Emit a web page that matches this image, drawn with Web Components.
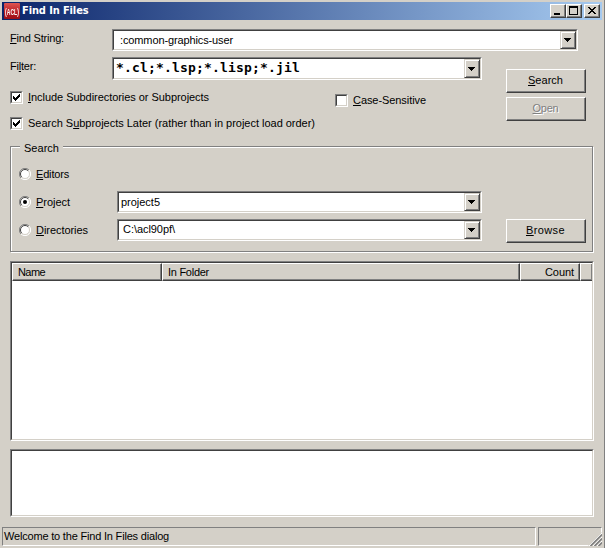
<!DOCTYPE html>
<html lang="en"><head><meta charset="utf-8"><title>Find In Files</title>
<style>
html,body{margin:0;width:605px;height:548px;overflow:hidden;background:#d4d0c8}
body{font:11px/14px "Liberation Sans",Arial,sans-serif;color:#000}
</style></head><body>
<find-dialog></find-dialog>
<script>
const define=(name,css,html,setup)=>customElements.define(name,class extends HTMLElement{
  constructor(){super();this.attachShadow({mode:'open'}).innerHTML=`<style>*{box-sizing:border-box}:host{box-sizing:border-box}${css}</style>${html}`;}
  connectedCallback(){if(setup)setup(this,this.shadowRoot);}
});
const px=v=>v+'px';

// Caption with an optional mnemonic letter; "w" is the advance width the text is spaced to.
define('ui-text',`:host{display:block;white-space:pre;flex:none}
 u{text-decoration:underline;text-decoration-thickness:1px;text-underline-offset:1px;text-decoration-skip-ink:none}`,
 `<span></span>`,(el,r)=>{
  const s=r.querySelector('span'),t=el.getAttribute('text'),k=el.hasAttribute('key')?+el.getAttribute('key'):-1;
  s.textContent='';
  if(k<0)s.textContent=t;
  else{const u=document.createElement('u');u.textContent=t[k];s.append(t.slice(0,k),u,t.slice(k+1));}
  const w=+el.getAttribute('w');
  if(w){const n=s.getBoundingClientRect().width;s.style.letterSpacing=px((w-n)/t.length);}
 });

define('ui-button',`:host{display:flex;align-items:flex-start;justify-content:center;width:80px;height:24px;flex:none;padding:3px 1px 0 0;
 border:1px solid;border-color:#fff #404040 #404040 #fff;box-shadow:inset -1px -1px #808080}
 :host([disabled]){color:#808080;text-shadow:1px 1px #fff}`,`<slot></slot>`);

define('ui-combo',`:host{display:block;height:22px;flex:none;border:1px solid;border-color:#808080 #fff #fff #808080}
 .in{height:100%;display:flex;background:#fff;border:1px solid;border-color:#404040 #d4d0c8 #d4d0c8 #404040}
 .t{flex:1;padding-left:var(--pad,6px);padding-top:var(--top,1px)}
 .b{width:16px;background:#d4d0c8;border:1px solid;border-color:#d4d0c8 #404040 #404040 #d4d0c8;box-shadow:inset 1px 1px #fff,inset -1px -1px #808080;display:flex;align-items:center;justify-content:center}
 svg{display:block;margin-right:1px}`,
 `<div class="in"><div class="t"><slot></slot></div><div class="b"><svg width="7" height="4" shape-rendering="crispEdges"><path d="M0 0h7v1H6v1H5v1H4v1H3V3H2V2H1V1H0z"/></svg></div></div>`);

define('ui-check',`:host{display:flex;flex:none;gap:5px;height:14px}
 .o{width:13px;height:13px;border:1px solid;border-color:#808080 #fff #fff #808080}
 .i{width:11px;height:11px;background:#fff;border:1px solid;border-color:#404040 #d4d0c8 #d4d0c8 #404040;padding:1px}
 svg{display:none}:host([checked]) svg{display:block}
 ::slotted(*){margin-top:-1px}`,
 `<div class="o"><div class="i"><svg width="7" height="7" shape-rendering="crispEdges"><path d="M0 2h1v1h1v1h1V3h1V2h1V1h1V0h1v3H6v1H5v1H4v1H3v1H2V6H1V5H0z"/></svg></div></div><slot></slot>`);

define('ui-radio',`:host{display:flex;flex:none;gap:5px;height:14px;width:98px}
 svg{display:block;flex:none;margin-top:1px}circle.d{display:none}:host([checked]) circle.d{display:block}`,
 `<svg width="12" height="12"><circle cx="6" cy="6" r="5" fill="#fff"/><path d="M2 10A5.5 5.5 0 0 1 10 2" fill="none" stroke="#808080"/><path d="M10 2A5.5 5.5 0 0 1 2 10" fill="none" stroke="#fff"/><path d="M2.8 9.2A4.5 4.5 0 0 1 9.2 2.8" fill="none" stroke="#404040"/><path d="M9.2 2.8A4.5 4.5 0 0 1 2.8 9.2" fill="none" stroke="#d4d0c8"/><circle class="d" cx="6" cy="6" r="2"/></svg><slot></slot>`);

define('ui-sunken',`:host{display:block;flex:none;border:1px solid;border-color:#808080 #fff #fff #808080}
 .i{height:100%;background:#fff;border:1px solid;border-color:#404040 #d4d0c8 #d4d0c8 #404040}`,`<div class="i"><slot></slot></div>`);

define('ui-header',`:host{display:flex;height:18px;background:#d4d0c8}`,`<slot></slot>`);
define('ui-column',`:host{display:flex;height:18px;padding:1px 5px 0 5px;flex:none;border:1px solid;border-color:#fff #404040 #404040 #fff;box-shadow:inset -1px -1px #808080}
 :host([end]){justify-content:flex-end}:host([last]){flex:1;border-right:0}`,`<slot></slot>`);

define('title-button',`:host{display:block;width:16px;height:14px;flex:none;background:#d4d0c8;border:1px solid;border-color:#fff #404040 #404040 #fff;box-shadow:inset -1px -1px #808080}
 svg{display:block}`,`<svg width="14" height="12" shape-rendering="crispEdges"><path/></svg>`,(el,r)=>{
  r.querySelector('path').setAttribute('d',{
   min:'M3 8h6v2H3z',
   max:'M2 1h9v9H2zM3 3v6h7V3z',
   close:'M3 2h2v1h1v1h2V3h1V2h2v1h-1v1H9v1H8v1h1v1h1v1h1v1H9V8H8V7H6v1H5v1H3V8h1V7h1V6h1V5H5V4H4V3H3z'}[el.getAttribute('kind')]);
  r.querySelector('path').setAttribute('fill-rule','evenodd');
 });

define('title-bar',`:host{display:flex;height:18px;padding:0 2px;flex:none;background:linear-gradient(90deg,#0a246a,#a6caf0);color:#fff;font:bold 11px/14px "DejaVu Sans Condensed","DejaVu Sans",sans-serif}
 .ic{width:16px;height:16px;margin-top:1px;border-radius:1px;background:linear-gradient(#df5551,#b21820 65%,#9c1018);display:flex;align-items:center;justify-content:center}
 .ic ui-text{font:bold 5px/8px "Liberation Sans",sans-serif;transform:scaleY(1.9)}
 .t{flex:1;padding:2px 0 0 2px}.b{display:flex;padding-top:2px}title-button[kind=close]{margin-left:2px}`,
 `<div class="ic"><ui-text text="(ACL)" w="14"></ui-text></div><div class="t"><ui-text text="Find In Files" w="66.5"></ui-text></div><div class="b"><title-button kind="min"></title-button><title-button kind="max"></title-button><title-button kind="close"></title-button></div>`);

define('ui-group',`:host{display:block;flex:none;height:107px}
 .f{height:100%;display:grid}.f>*{grid-area:1/1}
 .e{border:1px solid #808080;box-shadow:inset 1px 1px #fff,1px 1px #fff;margin:0 1px 1px 0}
 .l{justify-self:start;align-self:start;background:#d4d0c8;margin:-5px 0 0 10px;width:43px;height:14px;padding-left:4px}
 .c{padding:20px 8px 0 9px}`,
 `<div class="f"><div class="e"></div><div class="l"><slot name="legend"></slot></div><div class="c"><slot></slot></div></div>`);

define('status-bar',`:host{display:flex;gap:2px;height:19px;flex:none}
 .p{border:1px solid;border-color:#808080 #fff #fff #808080;height:19px;padding:1px 0 0 1px}.a{width:534px}.z{width:64px;display:flex;justify-content:flex-end;align-items:flex-end}
 svg{display:block;margin:0 -1px -1px 0}`,
 `<div class="p a"><slot></slot></div><div class="p z"><svg width="14" height="14" viewBox="0 0 14 14"><path d="M0 14L14 0V14z" fill="#d4d0c8"/><path d="M1 14L14 1M5 14L14 5M9 14L14 9" stroke="#fff"/><path d="M2.5 14L14 2.5M6.5 14L14 6.5M10.5 14L14 10.5" stroke="#808080" stroke-width="1.7"/></svg></div>`);

define('find-dialog',`:host{display:flex;flex-direction:column;width:605px;height:548px;padding:2px 3px 0 2px;background:#d4d0c8;box-shadow:inset -1px 0 #808080}
 main{display:flex;flex-direction:column;height:497px;padding:9px 0 0 8px;flex:none}
 .top{display:grid;grid-template-columns:496px 80px;height:115px;flex:none}
 .left{display:flex;flex-direction:column}
 .r{display:flex;align-items:flex-start;flex:none}.r>ui-text{width:102px}
 .buttons{padding-top:40px;display:flex;flex-direction:column;gap:4px}
 ui-group{width:584px;margin-top:2px}
 .filter{height:23px;--pad:2px;--top:0px;font:bold 13px/18px "DejaVu Sans Mono",monospace}`,
`<title-bar></title-bar>
<main>
 <div class="top"><div class="left">
  <div class="r" style="height:28px"><ui-text text="Find String:" key="0" w="54" style="margin-top:2px"></ui-text><ui-combo style="width:466px"><ui-text text=":common-graphics-user" w="113" style="padding-top:1px"></ui-text></ui-combo></div>
  <div class="r" style="height:34px"><ui-text text="Filter:" key="2" w="26" style="margin-top:2px"></ui-text><ui-combo class="filter" style="width:370px"><ui-text text="*.cl;*.lsp;*.lisp;*.jil" w="184"></ui-text></ui-combo></div>
  <div class="r" style="height:26px"><ui-check checked style="width:325px"><ui-text text="Include Subdirectories or Subprojects" key="0" w="181"></ui-text></ui-check><ui-check style="margin-top:3px"><ui-text text="Case-Sensitive" key="0" w="73"></ui-text></ui-check></div>
  <ui-check checked><ui-text text="Search Subprojects Later (rather than in project load order)" key="8" w="287"></ui-text></ui-check>
 </div><div class="buttons"><ui-button><ui-text text="Search" key="0" w="35"></ui-text></ui-button><ui-button disabled><ui-text text="Open" key="0" w="26"></ui-text></ui-button></div></div>
 <ui-group><ui-text slot="legend" text="Search" w="35"></ui-text>
  <div class="r" style="height:25px"><ui-radio style="margin-top:1px"><ui-text text="Editors" key="0" w="33"></ui-text></ui-radio></div>
  <div class="r" style="height:28px"><ui-radio checked style="margin-top:4px"><ui-text text="Project" key="0" w="34"></ui-text></ui-radio><ui-combo style="width:365px;--pad:2px"><ui-text text="project5" w="39" style="padding-top:1px"></ui-text></ui-combo></div>
  <div class="r"><ui-radio style="margin-top:4px"><ui-text text="Directories" key="0" w="52"></ui-text></ui-radio><ui-combo style="width:365px;--pad:4px"><ui-text text="C:\\acl90pf\\" w="52"></ui-text></ui-combo><ui-button style="margin-left:24px"><ui-text text="Browse" key="0" w="39"></ui-text></ui-button></div>
 </ui-group>
 <ui-sunken style="width:584px;height:180px;margin-top:8px"><ui-header><ui-column style="width:150px"><ui-text text="Name" w="27"></ui-text></ui-column><ui-column style="width:358px"><ui-text text="In Folder" w="41"></ui-text></ui-column><ui-column end style="width:60px"><ui-text text="Count" w="29"></ui-text></ui-column><ui-column last></ui-column></ui-header></ui-sunken>
 <ui-sunken style="width:584px;height:68px;margin-top:8px"></ui-sunken>
</main>
<status-bar style="margin-top:10px"><ui-text text="Welcome to the Find In Files dialog" w="165"></ui-text></status-bar>
`);
</script></body></html>
